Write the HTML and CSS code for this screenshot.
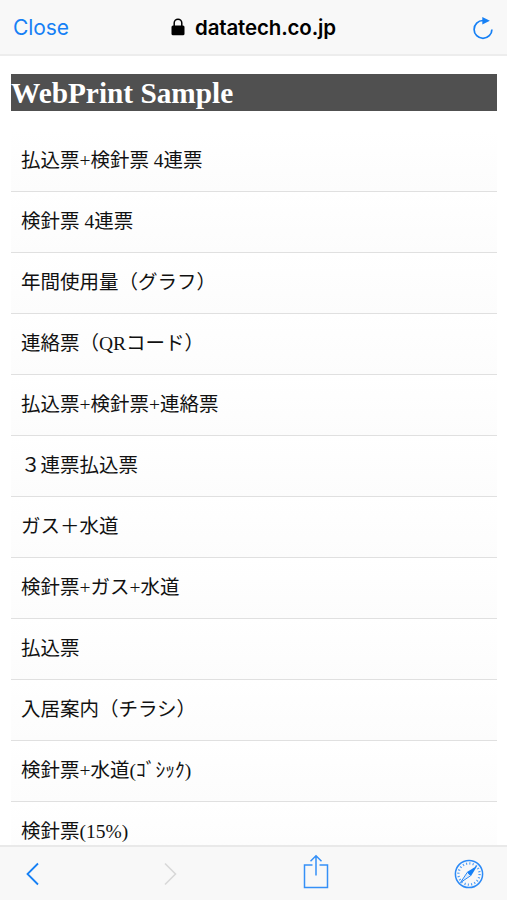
FILE: index.html
```html
<!DOCTYPE html>
<html lang="ja">
<head>
<meta charset="utf-8">
<title>WebPrint Sample</title>
<link rel="stylesheet" href="styles.css">
</head>
<body>
<header class="topbar">
  <span class="close">Close</span>
  <div class="address">
    <svg class="lock" width="14" height="18" viewBox="0 0 14 18"><path d="M3.2 8V5a3.8 3.8 0 0 1 7.6 0v3" fill="none" stroke="#000" stroke-width="1.5"/><rect x="0.5" y="7.5" width="13" height="9.7" rx="1.5"/></svg>
    <span class="host">datatech.co.jp</span>
  </div>
  <svg class="reload" width="22" height="24" viewBox="0 0 22 24"><path d="M11 4.500A8.900 8.900 0 1 0 19.900 13.400" fill="none" stroke="#1680f5" stroke-width="1.700"/><path d="M10.300 1v7.600L17.900 4.800z" fill="#1680f5"/></svg>
</header>
<main class="page">
  <h1 class="title">WebPrint Sample</h1>
  <ul class="menu">
    <li>払込票+検針票 4連票</li>
    <li>検針票 4連票</li>
    <li>年間使用量（グラフ）</li>
    <li>連絡票（QRコード）</li>
    <li>払込票+検針票+連絡票</li>
    <li>３連票払込票</li>
    <li>ガス＋水道</li>
    <li>検針票+ガス+水道</li>
    <li>払込票</li>
    <li>入居案内（チラシ）</li>
    <li>検針票+水道(ｺﾞｼｯｸ)</li>
    <li>検針票(15%)</li>
  </ul>
</main>
<footer class="toolbar">
  <svg class="back" width="14" height="24" viewBox="0 0 14 24"><path d="M12 1.500 1.500 12 12 22.500" fill="none" stroke="#1680f5" stroke-width="1.800"/></svg>
  <svg class="forward" width="14" height="24" viewBox="0 0 14 24"><path d="M2 1.500 12.500 12 2 22.500" fill="none" stroke="#d8d8d8" stroke-width="1.600"/></svg>
  <svg class="share" width="26" height="36" viewBox="0 0 26 36"><path d="M9.500 11H1.500v22.500h23V11h-8M13 21.500V2M7.500 7.300 13 1.800l5.500 5.500" fill="none" stroke="#3590f7" stroke-width="1.500"/></svg>
  <svg class="compass" width="30" height="30" viewBox="0 0 30 30"><circle cx="15" cy="15" r="13.600" fill="none" stroke="#2c8af6" stroke-width="1.500"/><circle cx="15" cy="15" r="10.600" fill="none" stroke="#4d9df8" stroke-width="2.300" stroke-dasharray="1.100 2.230"/><path d="M23.500 6.500 17 17 13 13z" fill="#1680f5"/><path d="M6.500 23.500 13.300 13.300 16.700 16.700z" fill="#d9e9fb" stroke="#2c8af6" stroke-width="1"/></svg>
</footer>
</body>
</html>
```
FILE: styles.css
```css
* { box-sizing: border-box; }

body {
  margin: 0;
  height: 900px;
  overflow: hidden;
  display: flex;
  flex-direction: column;
  background: #fff;
  color: #111;
}

.topbar {
  flex: none;
  height: 56px;
  display: grid;
  grid-template-columns: 100px 1fr 100px;
  align-items: center;
  padding: 2px 13px 0;
  background: #f8f8f8;
  border-bottom: 2px solid #ededed;
  font-family: Inter, "Liberation Sans", sans-serif;
  font-size: 21px;
  line-height: 28px;
}

.close {
  color: #1680f5;
  letter-spacing: -0.1px;
}

.address {
  display: flex;
  justify-content: center;
  align-items: center;
  gap: 10px;
  color: #000;
}

.lock { margin-top: -2px; }

.host {
  font-weight: 600;
  font-size: 20.500px;
  letter-spacing: -0.15px;
}

.reload { justify-self: end; }

.page {
  flex: 1;
  min-height: 0;
  overflow: hidden;
  padding: 18px 10px 0 11px;
  font-family: "Liberation Serif", "Noto Sans CJK JP", serif;
}

.title {
  margin: 0;
  height: 37px;
  line-height: 39px;
  font-size: 29.300px;
  font-weight: bold;
  color: #fff;
  background: #505050;
}

.menu {
  margin: 19.500px 0 0;
  padding: 0;
  list-style: none;
}

.menu li {
  height: 61.050px;
  padding: 0 10px;
  font-size: 19.500px;
  line-height: 60.800px;
  white-space: nowrap;
  border-bottom: 1.500px solid #e0e0e0;
  background: linear-gradient(#fff, #fcfcfc);
}

.toolbar {
  flex: none;
  height: 55px;
  display: grid;
  grid-template-columns: 137px 147px 153px 1fr;
  align-items: center;
  padding-left: 26px;
  background: #f8f8f8;
  border-top: 2px solid #e9e9e9;
}

.share { margin: -3px 0 0 -7px; }

.compass { margin-left: -9px; }
```
